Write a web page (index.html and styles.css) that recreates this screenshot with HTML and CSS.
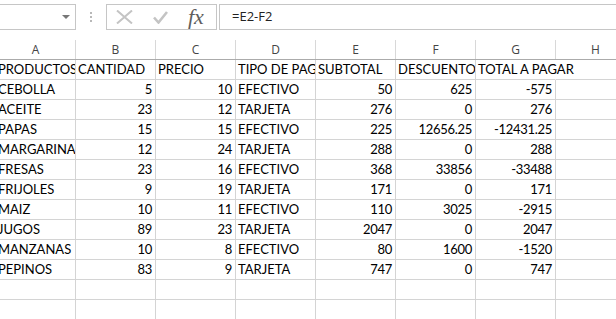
FILE: index.html
```html
<!DOCTYPE html>
<html lang="es">
<head>
    <meta charset="UTF-8">
    <meta name="viewport" content="width=device-width, initial-scale=1.0">
    <title>Libro1 - Excel</title>
    <link rel="stylesheet" href="styles.css">
</head>
<body>
    <div class="formula-bar">
        <div class="name-box"><span class="caret"></span></div>
        <svg class="grip" width="2" height="11" viewBox="0 0 2 11">
            <rect x="0" y="0" width="2" height="2"/>
            <rect x="0" y="4" width="2" height="2"/>
            <rect x="0" y="8" width="2" height="2"/>
        </svg>
        <div class="fx-buttons">
            <svg class="icon-cancel" width="17" height="14" viewBox="0 0 17 14">
                <path d="M1 0.5 L16 13.5 M16 0.5 L1 13.5"/>
            </svg>
            <svg class="icon-enter" width="15" height="13" viewBox="0 0 15 13">
                <path d="M1 6.5 L5.5 11.5 L14 1"/>
            </svg>
            <span class="fx">fx</span>
        </div>
        <div class="formula-input">=E2-F2</div>
    </div>

    <div class="sheet">
        <div class="row col-heads">
            <div>A</div><div>B</div><div>C</div><div>D</div>
            <div>E</div><div>F</div><div>G</div><div>H</div>
        </div>
        <div class="row">
            <div class="cell">PRODUCTOS</div>
            <div class="cell">CANTIDAD</div>
            <div class="cell">PRECIO</div>
            <div class="cell">TIPO DE PAGO</div>
            <div class="cell">SUBTOTAL</div>
            <div class="cell">DESCUENTOS</div>
            <div class="cell spill">TOTAL A PAGAR</div>
            <div class="cell"></div>
        </div>
        <div class="row">
            <div class="cell">CEBOLLA</div><div class="cell num">5</div><div class="cell num">10</div><div class="cell">EFECTIVO</div>
            <div class="cell num">50</div><div class="cell num">625</div><div class="cell num">-575</div><div class="cell"></div>
        </div>
        <div class="row">
            <div class="cell">ACEITE</div><div class="cell num">23</div><div class="cell num">12</div><div class="cell">TARJETA</div>
            <div class="cell num">276</div><div class="cell num">0</div><div class="cell num">276</div><div class="cell"></div>
        </div>
        <div class="row">
            <div class="cell">PAPAS</div><div class="cell num">15</div><div class="cell num">15</div><div class="cell">EFECTIVO</div>
            <div class="cell num">225</div><div class="cell num">12656.25</div><div class="cell num">-12431.25</div><div class="cell"></div>
        </div>
        <div class="row">
            <div class="cell">MARGARINA</div><div class="cell num">12</div><div class="cell num">24</div><div class="cell">TARJETA</div>
            <div class="cell num">288</div><div class="cell num">0</div><div class="cell num">288</div><div class="cell"></div>
        </div>
        <div class="row">
            <div class="cell">FRESAS</div><div class="cell num">23</div><div class="cell num">16</div><div class="cell">EFECTIVO</div>
            <div class="cell num">368</div><div class="cell num">33856</div><div class="cell num">-33488</div><div class="cell"></div>
        </div>
        <div class="row">
            <div class="cell">FRIJOLES</div><div class="cell num">9</div><div class="cell num">19</div><div class="cell">TARJETA</div>
            <div class="cell num">171</div><div class="cell num">0</div><div class="cell num">171</div><div class="cell"></div>
        </div>
        <div class="row">
            <div class="cell">MAIZ</div><div class="cell num">10</div><div class="cell num">11</div><div class="cell">EFECTIVO</div>
            <div class="cell num">110</div><div class="cell num">3025</div><div class="cell num">-2915</div><div class="cell"></div>
        </div>
        <div class="row">
            <div class="cell">JUGOS</div><div class="cell num">89</div><div class="cell num">23</div><div class="cell">TARJETA</div>
            <div class="cell num">2047</div><div class="cell num">0</div><div class="cell num">2047</div><div class="cell"></div>
        </div>
        <div class="row">
            <div class="cell">MANZANAS</div><div class="cell num">10</div><div class="cell num">8</div><div class="cell">EFECTIVO</div>
            <div class="cell num">80</div><div class="cell num">1600</div><div class="cell num">-1520</div><div class="cell"></div>
        </div>
        <div class="row">
            <div class="cell">PEPINOS</div><div class="cell num">83</div><div class="cell num">9</div><div class="cell">TARJETA</div>
            <div class="cell num">747</div><div class="cell num">0</div><div class="cell num">747</div><div class="cell"></div>
        </div>
        <div class="row">
            <div class="cell"></div><div class="cell"></div><div class="cell"></div><div class="cell"></div>
            <div class="cell"></div><div class="cell"></div><div class="cell"></div><div class="cell"></div>
        </div>
        <div class="row">
            <div class="cell"></div><div class="cell"></div><div class="cell"></div><div class="cell"></div>
            <div class="cell"></div><div class="cell"></div><div class="cell"></div><div class="cell"></div>
        </div>
    </div>
</body>
</html>
```

FILE: styles.css
```css
body {
    margin: 0;
    width: 616px;
    height: 319px;
    overflow: hidden;
    background-color: #fff;
    font-family: Lato, "Liberation Sans", sans-serif;
    color: #000;
}
.formula-bar {
    display: flex;
    align-items: flex-start;
    height: 40px;
    padding-top: 4px;
    box-sizing: border-box;
}
.name-box {
    display: flex;
    justify-content: flex-end;
    align-items: center;
    width: 80px;
    height: 26px;
    margin-left: -4px;
    padding-right: 5px;
    border: 1px solid #c6c6c6;
    box-sizing: border-box;
}
.caret {
    width: 0;
    height: 0;
    border-left: 4px solid transparent;
    border-right: 4px solid transparent;
    border-top: 4px solid #777;
}
.grip {
    margin: 8px 0 0 14px;
    fill: #b8b8b8;
}
.fx-buttons {
    display: flex;
    align-items: center;
    width: 111px;
    height: 26px;
    margin-left: 14px;
    border: 1px solid #c6c6c6;
    box-sizing: border-box;
}
.icon-cancel {
    margin-left: 9px;
    fill: none;
    stroke: #c4c4c4;
    stroke-width: 2;
}
.icon-enter {
    margin: 1px 0 0 20px;
    fill: none;
    stroke: #c4c4c4;
    stroke-width: 2.6;
}
.fx {
    margin-left: 20px;
    font-family: "Liberation Serif", serif;
    font-style: italic;
    font-size: 22px;
    line-height: 24px;
    color: #5e5e5e;
}
.formula-input {
    flex: 1;
    height: 26px;
    margin: 0 -10px 0 2px;
    padding-left: 12px;
    border: 1px solid #c6c6c6;
    box-sizing: border-box;
    font-family: "Open Sans", sans-serif;
    font-size: 13px;
    line-height: 23px;
    color: #222;
}
.sheet {
    margin-left: -4px;
}
.row {
    display: grid;
    grid-template-columns: repeat(8, 80px);
}
.col-heads {
    height: 20px;
    border-bottom: 1px solid #ababab;
    box-sizing: border-box;
}
.col-heads div {
    border-right: 1px solid #d8d8d8;
    text-align: center;
    font-family: "Open Sans", sans-serif;
    font-size: 12px;
    line-height: 19px;
    color: #444;
}
.cell {
    height: 20px;
    padding: 0 3px 0 2px;
    border-right: 1px solid #d4d4d4;
    border-bottom: 1px solid #d4d4d4;
    box-sizing: border-box;
    font-size: 13px;
    line-height: 19px;
    white-space: nowrap;
    overflow: hidden;
}
.num {
    text-align: right;
    letter-spacing: -0.3px;
}
.spill {
    overflow: visible;
    border-right-color: transparent;
}
```
